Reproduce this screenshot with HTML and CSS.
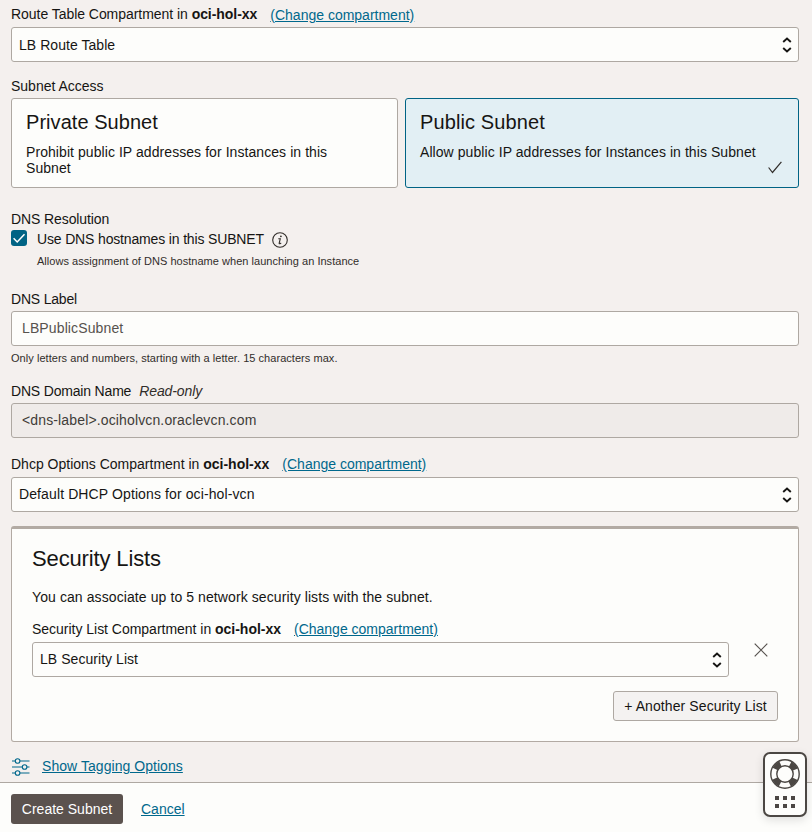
FILE: index.html
```html
<!DOCTYPE html>
<html lang="en">
<head>
<meta charset="utf-8">
<title>Create Subnet</title>
<link rel="stylesheet" href="styles.css">
</head>
<body>
<main class="form">
  <div class="label first"><span class="t-route">Route Table Compartment in <b>oci-hol-xx</b></span><a class="change" href="#">(Change compartment)</a></div>
  <div class="select"><span class="t-lbroute">LB Route Table</span><svg class="chev" viewBox="0 0 10 16"><path d="M1.200 5 5 1.500 8.800 5M1.200 11 5 14.500 8.800 11"/></svg></div>

  <div class="label access"><span class="t-access">Subnet Access</span></div>
  <div class="cards">
    <div class="card private"><h3 class="t-priv">Private Subnet</h3><p class="t-privd">Prohibit public IP addresses for Instances in this<br>Subnet</p></div>
    <div class="card public"><h3 class="t-pub">Public Subnet</h3><p class="t-pubd">Allow public IP addresses for Instances in this Subnet</p>
      <svg class="tick" viewBox="0 0 14 13"><path d="M.6 6.500 4.500 11.500 13.400.8"/></svg></div>
  </div>

  <div class="label dns"><span class="t-dnsres">DNS Resolution</span></div>
  <div class="check-row">
    <span class="checkbox"><svg viewBox="0 0 16 16"><path d="M2.600 8.300 6.200 12 13.500 4.300"/></svg></span>
    <span class="check-text t-use">Use DNS hostnames in this SUBNET</span>
    <svg class="info" viewBox="0 0 16 16"><circle cx="8" cy="8" r="7.300"/><path d="M6.300 6.700H8.300L7.200 11.200Q7.100 12 8 11.700L9.200 11.100" /><circle class="dot" cx="8.900" cy="4.300" r=".9"/></svg>
  </div>
  <div class="hint indent"><span class="t-allows">Allows assignment of DNS hostname when launching an Instance</span></div>

  <div class="label dns-label"><span class="t-dnslabel">DNS Label</span></div>
  <div class="input"><span class="t-lbpub">LBPublicSubnet</span></div>
  <div class="hint below"><span class="t-only">Only letters and numbers, starting with a letter. 15 characters max.</span></div>

  <div class="label domain"><span class="t-domain">DNS Domain Name</span><i class="t-ro">Read-only</i></div>
  <div class="input readonly"><span class="t-dom">&lt;dns-label&gt;.ociholvcn.oraclevcn.com</span></div>

  <div class="label dhcp"><span class="t-dhcp">Dhcp Options Compartment in <b>oci-hol-xx</b></span><a class="change" href="#">(Change compartment)</a></div>
  <div class="select"><span class="t-default">Default DHCP Options for oci-hol-vcn</span><svg class="chev" viewBox="0 0 10 16"><path d="M1.200 5 5 1.500 8.800 5M1.200 11 5 14.500 8.800 11"/></svg></div>

  <section class="panel">
    <h2 class="t-sec">Security Lists</h2>
    <p class="intro t-you">You can associate up to 5 network security lists with the subnet.</p>
    <div class="label"><span class="t-seclist">Security List Compartment in <b>oci-hol-xx</b></span><a class="change" href="#">(Change compartment)</a></div>
    <div class="list-row">
      <div class="select"><span class="t-lbsec">LB Security List</span><svg class="chev" viewBox="0 0 10 16"><path d="M1.200 5 5 1.500 8.800 5M1.200 11 5 14.500 8.800 11"/></svg></div>
      <svg class="remove" viewBox="0 0 14 14"><path d="M.7.7 13.300 13.300M13.300.7.7 13.300"/></svg>
    </div>
    <div class="add-row"><button class="add"><span class="t-add">+ Another Security List</span></button></div>
  </section>

  <div class="tagging">
    <svg class="sliders" viewBox="0 0 18 18"><path d="M0 3H3.200M8 3H17.500M0 9H10.200M15 9H17.500M0 15H3.200M8 15H17.500"/><circle cx="5.600" cy="3" r="2.300"/><circle cx="12.600" cy="9" r="2.300"/><circle cx="5.600" cy="15" r="2.300"/></svg>
    <a class="t-show" href="#">Show Tagging Options</a>
  </div>
</main>
<footer class="footer"><button class="create"><span class="t-create">Create Subnet</span></button><a class="t-cancel" href="#">Cancel</a></footer>
<aside class="help">
  <svg viewBox="0 0 30 30"><circle class="ring" cx="15" cy="15" r="14.200"/><circle class="ring" cx="15" cy="15" r="8.200"/><circle class="band" cx="15" cy="15" r="11"/></svg>
  <div class="dots"><i></i><i></i><i></i><i></i><i></i><i></i></div>
</aside>
</body>
</html>
```
FILE: styles.css
```css
* { box-sizing: border-box; }
body { margin: 0; height: 832px; display: flex; flex-direction: column; overflow: hidden; position: relative; background: #f4f0ee; color: #161513; font: 14px/16px "Liberation Sans", Arial, sans-serif; }
h2, h3, p { margin: 0; font-weight: 400; }
a { color: #00688c; text-decoration: underline; text-underline-offset: 1px; }
span, a, i { white-space: nowrap; }
.form { flex: 1; min-height: 0; padding: 7px 13px 0 11px; }
.label { display: flex; height: 16px; margin-bottom: 4px; }
.first span { margin-top: -1px; }
.change { margin-left: 13px; }
.select { display: flex; align-items: center; justify-content: space-between; height: 35px; padding: 0 6px 0 7px; border: 1px solid #aea8a2; border-radius: 3px; background: #fdfdfb; }
.select span { margin-top: -1px; }
.first + .select span { margin-top: 0; }
.chev { width: 10px; height: 16px; fill: none; stroke: #161513; stroke-width: 1.900; }
.access { margin-top: 16px; }
.cards { display: grid; grid-template-columns: 387px 394px; gap: 7px; height: 90px; }
.card { position: relative; padding: 11px 14px 0; border: 1px solid #aea8a2; border-radius: 3px; background: #fdfdfb; }
.public { border-color: #006384; background: #e2eff4; }
.card h3 { font-size: 20px; line-height: 24px; margin-bottom: 10px; }
.tick { position: absolute; right: 16px; bottom: 13px; width: 14px; height: 13px; fill: none; stroke: #312d2a; stroke-width: 1.200; }
.dns { margin-top: 23px; }
.check-row { display: flex; height: 16px; }
.checkbox { width: 16px; height: 16px; margin-top: -1px; border-radius: 3px; background: #006384; }
.checkbox svg { display: block; fill: none; stroke: #fff; stroke-width: 1.500; }
.check-text { margin: 0 0 0 10px; }
.info { width: 16px; height: 16px; margin: 1px 0 0 8px; fill: none; stroke: #312d2a; stroke-width: 1.100; }
.info .dot { fill: #312d2a; stroke: none; }
.hint { height: 14px; font-size: 11px; line-height: 14px; color: #312d2a; }
.indent { margin: 7px 0 0 26px; }
.dns-label { margin-top: 23px; }
.input { height: 35px; padding: 8px 10px; border: 1px solid #aea8a2; border-radius: 3px; background: #fdfdfb; color: #57524e; }
.readonly { background: #efebe9; color: #403c38; }
.below { margin-top: 5px; }
.domain { margin-top: 18px; }
.domain i { margin-left: 8px; color: #312d2a; }
.dhcp { margin-top: 18px; margin-bottom: 5px; }
.panel { height: 216px; margin-top: 14px; padding: 17px 20px 0; border: 1px solid #b2aaa3; border-top-width: 3px; border-radius: 3px; background: #fdfdfb; }
.panel h2 { height: 27px; font-size: 22px; line-height: 26px; }
.intro { margin: 16px 0; }
.panel .label { margin-bottom: 5px; }
.list-row { display: flex; }
.list-row .select { width: 697px; }
.remove { width: 14px; height: 14px; margin: 1px 0 0 25px; fill: none; stroke: #57524e; stroke-width: 1.200; }
.add-row { display: flex; justify-content: flex-end; margin-top: 14px; }
button { display: flex; justify-content: center; align-items: center; height: 30px; padding: 0; border: 1px solid #aea8a2; border-radius: 3px; font: inherit; color: inherit; }
.add { width: 165px; background: #f4f2f1; }
.tagging { display: flex; margin-top: 16px; height: 18px; }
.tagging a { margin-left: 12px; }
.sliders { width: 18px; height: 18px; margin: -.5px 0 0 1px; fill: none; stroke: #00688c; stroke-width: 1.100; }
.footer { display: flex; align-items: flex-start; height: 50px; padding: 11px; border-top: 1px solid #aea8a2; background: #fdfdfb; }
.create { width: 112px; border: 0; background: #5b524e; color: #fff; }
.footer a { margin: 7px 0 0 18px; }
.help { position: absolute; left: 763px; top: 752px; width: 44px; height: 65px; padding: 5px 5px 0; border: 2px solid #4b4743; border-radius: 7px; background: #fdfdfb; box-shadow: 0 3px 10px rgba(0,0,0,.12); }
.help svg { display: block; width: 30px; height: 30px; fill: none; }
.ring { stroke: #4b4743; stroke-width: 1.400; }
.band { stroke: #4b4743; stroke-width: 6; stroke-dasharray: 7.400 9.879; stroke-dashoffset: -4.940; }
.dots { display: grid; grid-template-columns: repeat(3, 4px); gap: 4px; margin: 7px 0 0 5px; }
.dots i { width: 4px; height: 4px; background: #4b4743; }

.t-route { letter-spacing: -.045px; }
.t-dnsres { letter-spacing: -.1px; }
.t-dnslabel { letter-spacing: -.2px; }
.t-domain { letter-spacing: -.18px; }
.t-ro { letter-spacing: -.11px; }
.t-seclist { letter-spacing: -.02px; }
.t-allows { letter-spacing: .03px; }
.t-only { letter-spacing: .045px; }
.t-use { letter-spacing: -.155px; }
.t-privd, .t-pubd { letter-spacing: .068px; }
.t-priv { letter-spacing: .05px; }
.t-pub { letter-spacing: .12px; }
.t-lbpub { letter-spacing: .12px; }
.t-dom { letter-spacing: .14px; }
.t-default { letter-spacing: .11px; }
.t-lbroute, .t-lbsec, .t-show { letter-spacing: .05px; }
.t-sec { letter-spacing: -.14px; }
.t-you, .t-add { letter-spacing: .092px; }
```
